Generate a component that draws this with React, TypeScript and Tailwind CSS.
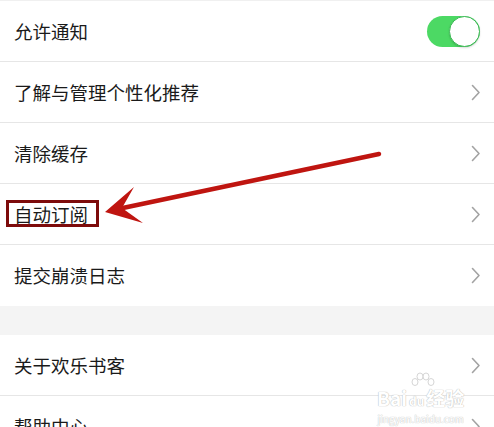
import React from "react";

const Chevron = () => (
  <svg width="10" height="17" viewBox="0 0 10 17" className="shrink-0">
    <path d="M1.5 1.5 L8 8.5 L1.5 15.5" fill="none" stroke="#a3a3a3" strokeWidth="1.6" strokeLinecap="round" strokeLinejoin="round" />
  </svg>
);

const Row = ({ label, border = true, right }: { label: string; border?: boolean; right?: React.ReactNode }) => (
  <div className={`flex items-center justify-between h-[61px] pl-[14px] pr-[13px] bg-white ${border ? "border-b border-[#e6e6e6]" : ""}`}>
    <span className="text-[18.5px] leading-none text-[#1a1a1a]">{label}</span>
    {right ?? <Chevron />}
  </div>
);

const Toggle = () => (
  <div className="relative w-[53px] h-[31px] rounded-full bg-[#4cd964] mr-[1px]">
    <div className="absolute right-0 top-0 w-[31px] h-[31px] rounded-full bg-white border border-[#3fb957] shadow-[0_1px_2px_rgba(0,0,0,0.15)]" />
  </div>
);

export default function App() {
  return (
    <div className="relative w-[494px] h-[427px] overflow-hidden bg-white font-['Noto_Sans_CJK_SC','Noto_Sans',sans-serif]">
      <div className="flex flex-col border-t border-[#f0f0f0]">
        <Row label="允许通知" right={<Toggle />} />
        <Row label="了解与管理个性化推荐" />
        <Row label="清除缓存" />
        <Row label="自动订阅" />
        <Row label="提交崩溃日志" border={false} />
        <div className="h-[29px] bg-[#f4f4f4]" />
        <Row label="关于欢乐书客" />
        <Row label="帮助中心" />
      </div>

      {/* red highlight box */}
      <div className="absolute left-[6px] top-[200px] w-[93px] h-[27px] border-[3px] border-[#7d0b0b]" />

      {/* arrow */}
      <svg className="absolute inset-0" width="494" height="427" viewBox="0 0 494 427">
        <line x1="379" y1="154" x2="118" y2="209" stroke="#bf1510" strokeWidth="4.5" strokeLinecap="round" />
        <path d="M105 212 L134 187 L122 208 L143 223 Z" fill="#bf1510" />
      </svg>

      {/* watermark */}
      <div className="absolute left-[377px] top-[372px] flex flex-col items-center pointer-events-none">
        <svg width="28" height="16" viewBox="0 0 28 16" className="ml-[4px]">
          <g fill="none" stroke="#d6d6d6" strokeWidth="1">
            <ellipse cx="6" cy="10" rx="3" ry="3.5" />
            <ellipse cx="11" cy="4.5" rx="3" ry="3.5" />
            <ellipse cx="17" cy="4.5" rx="3" ry="3.5" />
            <ellipse cx="22" cy="10" rx="3" ry="3.5" />
          </g>
        </svg>
        <div className="text-[19px] leading-[20px] font-bold text-white whitespace-nowrap [text-shadow:0_0_1px_#bdbdbd,0_0_1px_#bdbdbd]">
          Bai<span className="text-[12px] px-[2px] rounded-full">du</span>经验
        </div>
        <div className="mt-[2px] text-[10px] leading-[11px] text-white [text-shadow:0_0_1px_#c4c4c4,0_0_1px_#c4c4c4]">jingyan.baidu.com</div>
      </div>
    </div>
  );
}
